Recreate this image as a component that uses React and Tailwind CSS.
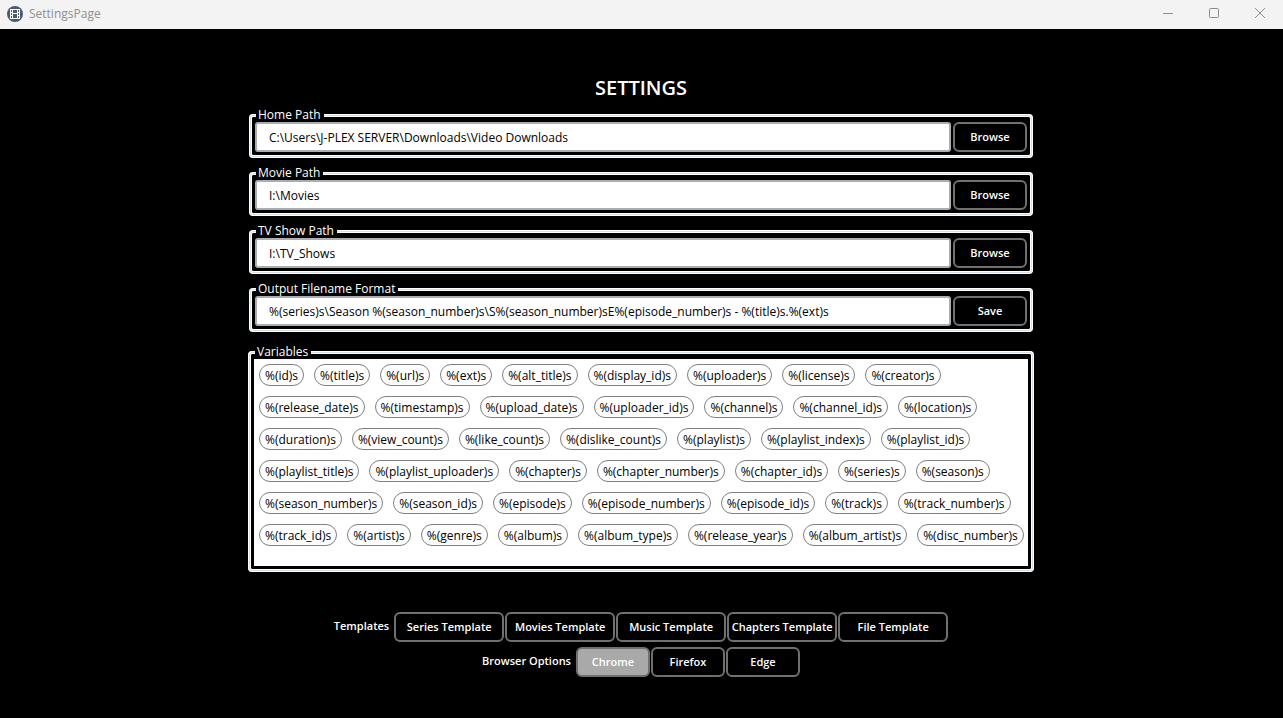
import React, { useState } from "react";

const PATHS = [
  { id: "home", label: "Home Path", value: "C:\\Users\\J-PLEX SERVER\\Downloads\\Video Downloads", action: "Browse" },
  { id: "movie", label: "Movie Path", value: "I:\\Movies", action: "Browse" },
  { id: "tv", label: "TV Show Path", value: "I:\\TV_Shows", action: "Browse" },
  {
    id: "format",
    label: "Output Filename Format",
    value: "%(series)s\\Season %(season_number)s\\S%(season_number)sE%(episode_number)s - %(title)s.%(ext)s",
    action: "Save",
  },
];

const VARIABLE_ROWS = [
  ["id", "title", "url", "ext", "alt_title", "display_id", "uploader", "license", "creator"],
  ["release_date", "timestamp", "upload_date", "uploader_id", "channel", "channel_id", "location"],
  ["duration", "view_count", "like_count", "dislike_count", "playlist", "playlist_index", "playlist_id"],
  ["playlist_title", "playlist_uploader", "chapter", "chapter_number", "chapter_id", "series", "season"],
  ["season_number", "season_id", "episode", "episode_number", "episode_id", "track", "track_number"],
  ["track_id", "artist", "genre", "album", "album_type", "release_year", "album_artist", "disc_number"],
];

const TEMPLATES = ["Series Template", "Movies Template", "Music Template", "Chapters Template", "File Template"];
const BROWSERS = ["Chrome", "Firefox", "Edge"];

function FilmIcon() {
  return (
    <svg className="size-4" viewBox="0 0 16 16" aria-hidden="true">
      <circle cx="8" cy="8" r="8" fill="#4b5a74" />
      <path d="M3 3h10v10H3z" fill="#fff" />
      <path d="M6 4h4v3H6zM6 8h4v4H6z" fill="#4b5a74" />
      <path d="M4 4h1v2H4zM4 7h1v2H4zM4 10h1v2H4zM11 4h1v2h-1zM11 7h1v2h-1zM11 10h1v2h-1z" fill="#4b5a74" />
    </svg>
  );
}

function WindowButton({ label, children }) {
  return (
    <button type="button" aria-label={label} className="flex h-full w-[46px] items-center justify-center">
      <svg className="size-3" viewBox="0 0 12 12" fill="none" stroke="#8c8c8c" aria-hidden="true">
        {children}
      </svg>
    </button>
  );
}

function TitleBar() {
  return (
    <header className="flex h-[29px] items-center bg-[#f3f3f3] pb-px pl-[7px]">
      <FilmIcon />
      <span className="pl-[6px] text-xs leading-4 text-[#8f8f8f]">SettingsPage</span>
      <div className="ml-auto flex h-[26px] self-start">
        <WindowButton label="Minimize">
          <path d="M1 6.5h10" />
        </WindowButton>
        <WindowButton label="Maximize">
          <rect x="1.5" y="1.5" width="9" height="9" rx="1" />
        </WindowButton>
        <WindowButton label="Close">
          <path d="M1 1l10 10M11 1L1 11" />
        </WindowButton>
      </div>
    </header>
  );
}

function GroupBox({ label, className = "", children }) {
  return (
    <fieldset
      className={`min-w-0 rounded-[4px] border-[3px] border-double border-white px-[3px] pb-[3px] [background:linear-gradient(#000,#000)_padding-box,linear-gradient(#d5dfe5,#d5dfe5)_border-box] ${className}`}
    >
      <legend className="ml-px bg-black pr-[3px] pb-0.5 pl-0.5 text-xs leading-[11px] text-white">{label}</legend>
      {children}
    </fieldset>
  );
}

function ActionButton({ wide, selected, children, ...rest }) {
  return (
    <button
      type="button"
      className={`h-[30px] shrink-0 rounded-[6px] border-2 border-[#707070] pt-px text-[11px] font-semibold whitespace-nowrap text-white ${
        wide ? "w-[110px]" : "w-[74px]"
      } ${selected ? "bg-[#a9a9a9]" : "bg-black"}`}
      {...rest}
    >
      {children}
    </button>
  );
}

export default function App() {
  const [browser, setBrowser] = useState("Chrome");

  return (
    <div className="flex min-h-screen flex-col bg-black font-['Segoe_UI','Open_Sans',sans-serif]">
      <TitleBar />
      <main className="mx-auto flex w-full max-w-[787px] flex-1 flex-col pt-[45px] pr-px">
        <h1 className="text-center text-xl leading-7 font-semibold text-white">SETTINGS</h1>

        <form className="mt-[7px] flex flex-col gap-[9px] px-px" onSubmit={(e) => e.preventDefault()}>
          {PATHS.map((p) => (
            <GroupBox key={p.id} label={<label htmlFor={p.id}>{p.label}</label>}>
              <div className="flex gap-0.5">
                <input
                  id={p.id}
                  type="text"
                  defaultValue={p.value}
                  className="h-[30px] min-w-0 flex-1 rounded-[3px] border-2 border-[#abadb3] bg-white px-3 text-xs text-black"
                />
                <ActionButton>{p.action}</ActionButton>
              </div>
            </GroupBox>
          ))}
        </form>

        <GroupBox label="Variables" className="mt-[14px]">
          <div className="flex min-h-[207px] flex-col gap-[10px] bg-white p-[5px]">
            {VARIABLE_ROWS.map((row) => (
              <div key={row[0]} className="flex gap-[10px]">
                {row.map((name) => (
                  <button
                    key={name}
                    type="button"
                    className="h-[22px] rounded-full border border-[#808080] px-[5px] pt-px text-xs leading-5 whitespace-nowrap text-black"
                  >
                    {`%(${name})s`}
                  </button>
                ))}
              </div>
            ))}
          </div>
        </GroupBox>

        <div className="mt-10 flex flex-col items-center gap-[5px] pb-10">
          <div className="flex items-center gap-[5px]" role="group" aria-labelledby="templates-label">
            <span id="templates-label" className="pb-0.5 text-[11px] font-semibold text-white">Templates</span>
            <div className="flex gap-px">
              {TEMPLATES.map((t) => (
                <ActionButton key={t} wide>{t}</ActionButton>
              ))}
            </div>
          </div>
          <div className="flex items-center gap-[5px]" role="group" aria-labelledby="browser-label">
            <span id="browser-label" className="pb-0.5 text-[11px] font-semibold text-white">Browser Options</span>
            <div className="flex gap-px">
              {BROWSERS.map((b) => (
                <ActionButton key={b} selected={b === browser} aria-pressed={b === browser} onClick={() => setBrowser(b)}>
                  {b}
                </ActionButton>
              ))}
            </div>
          </div>
        </div>
      </main>
    </div>
  );
}
